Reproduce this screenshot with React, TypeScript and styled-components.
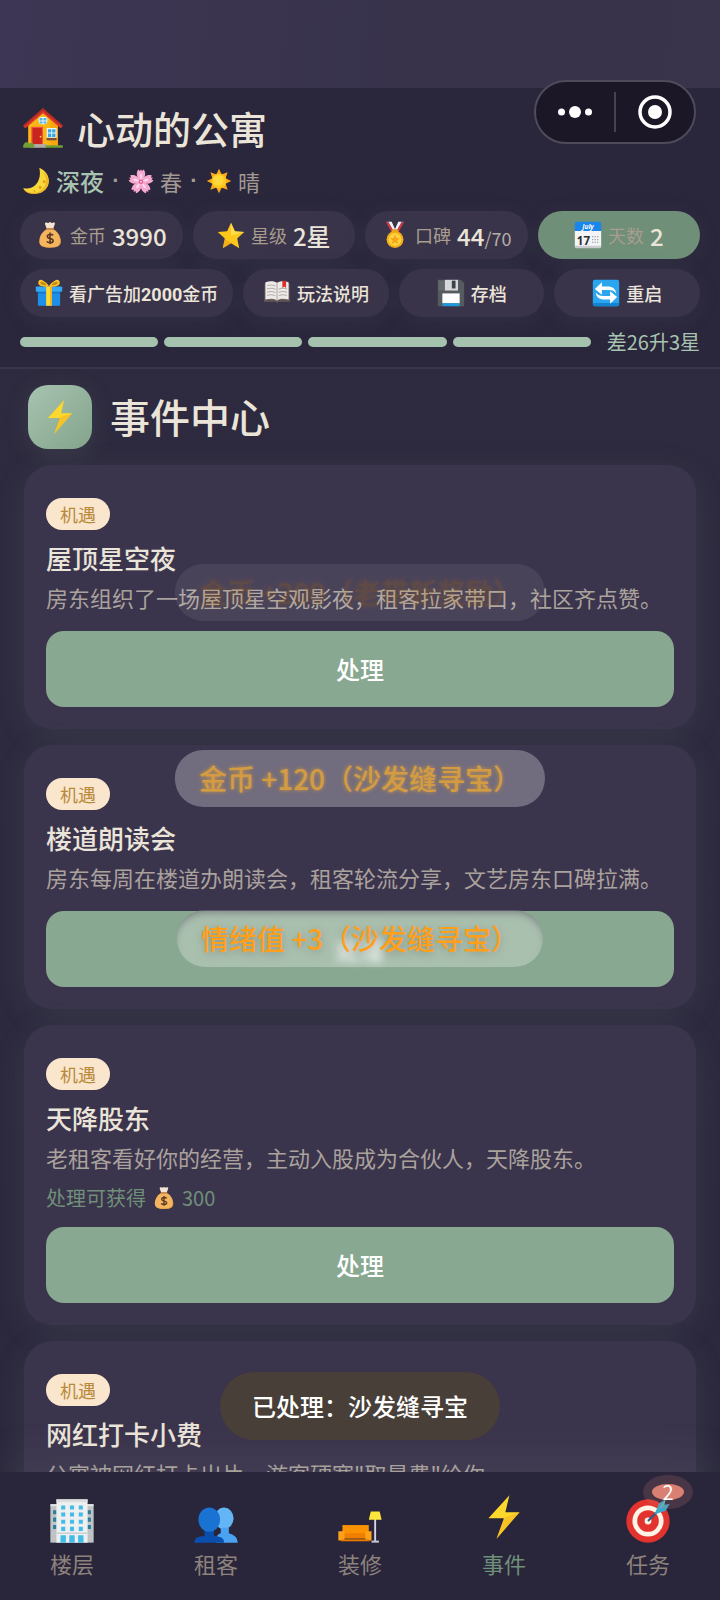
import React from "react";
import styled, { createGlobalStyle, css } from "styled-components";

const Global = createGlobalStyle`
  * { box-sizing: border-box; margin: 0; padding: 0; }
  body {
    font-family: "Noto Sans CJK SC", "Noto Sans", sans-serif;
    color: #ebe4d8;
    background: #2c283c;
  }
  button { font: inherit; color: inherit; border: 0; background: none; cursor: pointer; }
  svg { display: block; flex: none; }
`;

const Page = styled.div`
  position: relative;
  display: flex;
  flex-direction: column;
  height: 100vh;
  overflow: hidden;
  background: linear-gradient(180deg, #2e2a3e 0%, #2d293f 50%, #2b273d 100%);
`;

const StatusStrip = styled.div`
  flex: none;
  height: 88px;
  background: linear-gradient(100deg, #3d3654 0%, #38334b 60%, #39334b 100%);
`;

const Header = styled.header`
  flex: none;
  display: flex;
  flex-direction: column;
  padding: 12px 20px 10px;
  border-bottom: 2px solid #3a3647;
  background: #2a263c;
`;

const AppTitle = styled.h1`
  display: flex;
  align-items: center;
  gap: 13px;
  height: 56px;
  padding-left: 2px;
  font-size: 38px;
  line-height: 56px;
  font-weight: 500;
`;

const SeasonRow = styled.p`
  display: flex;
  align-items: center;
  height: 40px;
  margin: 5px 0 10px;
  padding-left: 2px;
  font-size: 22px;
  line-height: 40px;
  color: #a39b93;
  svg { margin-right: 6px; }
  strong { font-size: 24px; font-weight: 500; color: #a8c4b0; }
`;

const Dot = styled.span`
  width: 24px;
  text-align: center;
  font-weight: 700;
  font-family: "Liberation Sans", sans-serif;
`;

const PillRow = styled.div`
  display: flex;
  gap: 10px;
  margin-bottom: 10px;
`;

const pill = css`
  flex: 1 0 0;
  display: flex;
  align-items: center;
  justify-content: center;
  gap: 6px;
  height: 48px;
  border-radius: 24px;
  background: #3a344b;
  box-shadow: 0 4px 24px rgba(143, 176, 150, 0.08);
  white-space: nowrap;
`;

const Stat = styled.div<{ $active?: boolean }>`
  ${pill}
  ${(p) => p.$active && "background: #6f8f78;"}
`;

const StatLabel = styled.span`
  font-size: 18px;
  color: #a89d8e;
`;

const StatValue = styled.span`
  font-size: 24px;
  font-weight: 500;
  small { font-size: 18px; font-weight: 400; color: #b5aea6; }
`;

const ToolButton = styled.button`
  ${pill}
  && { padding: 0 15px; font-size: 18px; font-weight: 500; background: #3a344b; }
  b { font-family: Roboto, sans-serif; font-weight: 700; }
`;

const Progress = styled.div`
  display: flex;
  align-items: center;
  gap: 6px;
  height: 30px;
`;

const Segment = styled.span`
  flex: 1;
  height: 10px;
  border-radius: 5px;
  background: #a5c2ae;
`;

const ProgressText = styled.span`
  margin-left: 10px;
  font-size: 20px;
  line-height: 30px;
  color: #a8c4b0;
`;

const Main = styled.main`
  flex: 1;
  min-height: 0;
  overflow: hidden auto;
  scrollbar-width: none;
  padding: 16px 24px 0;
`;

const SectionHead = styled.div`
  display: flex;
  align-items: center;
  gap: 18px;
  padding: 0 4px;
  margin-bottom: 16px;
  h2 { padding-bottom: 2px; font-size: 40px; line-height: 60px; font-weight: 500; }
`;

const SectionIcon = styled.div`
  display: grid;
  place-items: center;
  width: 64px;
  height: 64px;
  border-radius: 20px;
  background: linear-gradient(135deg, #a6c3af, #84a48c);
  box-shadow: 0 4px 24px rgba(143, 176, 150, 0.15);
`;

const Cards = styled.div`
  display: flex;
  flex-direction: column;
  gap: 16px;
`;

const Card = styled.article`
  display: flex;
  flex-direction: column;
  align-items: flex-start;
  padding: 33px 22px 22px;
  border-radius: 28px;
  background: #3b344d;
  box-shadow: 0 6px 32px rgba(143, 176, 150, 0.12);
  h3 { margin: 9px 0 3px; font-size: 26px; line-height: 38px; font-weight: 500; }
  p { margin-bottom: 2px; font-size: 22px; line-height: 34px; color: #aaa29c; }
`;

const Tag = styled.span`
  padding: 0 14px;
  border-radius: 16px;
  font-size: 18px;
  line-height: 32px;
  color: #b8893a;
  background: #fae6cc;
`;

const Reward = styled.div`
  display: flex;
  align-items: center;
  gap: 6px;
  height: 28px;
  margin-top: 8px;
  font-size: 20px;
  line-height: 28px;
  color: #6f9079;
`;

const HandleButton = styled.button<{ $frosted?: boolean }>`
  width: 100%;
  height: 76px;
  margin-top: 15px;
  border-radius: 18px;
  && {
    padding-bottom: 2px;
    font-size: 24px;
    font-weight: 500;
    color: ${(p) => (p.$frosted ? "rgba(255, 255, 255, 0.05)" : "#fff")};
    text-shadow: ${(p) => (p.$frosted ? "0 0 9px #fff" : "none")};
    background: #89a891;
  }
`;

const Nav = styled.nav`
  flex: none;
  position: relative;
  display: flex;
  height: 128px;
  background: #29253b;
  box-shadow: 0 -8px 48px rgba(143, 160, 150, 0.12);
`;

const NavItem = styled.button<{ $active?: boolean }>`
  position: relative;
  flex: 1;
  display: flex;
  flex-direction: column;
  align-items: center;
  gap: 2px;
  && {
    padding-top: 26px;
    font-size: 22px;
    line-height: 34px;
    color: ${(p) => (p.$active ? "#6f9079" : "#8d837c")};
  }
  svg { transform: ${(p) => (p.$active ? "translateY(-4px)" : "none")}; }
`;

const Badge = styled.span`
  position: absolute;
  top: 12px;
  left: 50%;
  width: 32px;
  height: 16px;
  margin-left: 4px;
  border-radius: 50%;
  font-size: 20px;
  line-height: 16px;
  color: #fff;
  background: #d98072;
  box-shadow: 0 0 0 9px rgba(217, 128, 114, 0.18);
`;

const Capsule = styled.div`
  position: absolute;
  top: 80px;
  right: 24px;
  display: flex;
  align-items: center;
  width: 162px;
  height: 64px;
  border: 2px solid #4f4b5a;
  border-radius: 32px;
  background: #1b1726;
  button { flex: 1; display: grid; place-items: center; height: 40px; }
  button + button { border-left: 2px solid #46424f; }
`;

const Floater = styled.div<{ $top: number; $opacity: number; $color: string; $fill: string; $glow: string; $shade?: boolean }>`
  position: absolute;
  top: ${(p) => p.$top}px;
  left: 50%;
  transform: translateX(-50%);
  padding: 8px 24px;
  border-radius: 28px;
  font-size: 28px;
  line-height: 41px;
  font-weight: 500;
  white-space: nowrap;
  color: ${(p) => p.$color};
  background: ${(p) => p.$fill};
  box-shadow: ${(p) => (p.$shade ? "inset 0 6px 8px -4px rgba(59, 52, 77, 0.5)" : "none")};
  opacity: ${(p) => p.$opacity};
  text-shadow: ${(p) => p.$glow};
`;

const Toast = styled.div`
  position: absolute;
  bottom: 160px;
  left: 50%;
  transform: translateX(-50%);
  padding: 0 32px;
  border-radius: 34px;
  font-size: 24px;
  line-height: 68px;
  font-weight: 500;
  white-space: nowrap;
  color: #fff;
  background: #483f39;
`;

const art: Record<string, React.ReactNode> = {
  house: (
    <>
      <path d="M4 14 16 3l12 11v17H4z" fill="#fbb614" />
      <path d="M22 9l6 5v17h-6z" fill="#f9a70e" />
      <path d="M16 0 0 14l1.500 2.500L16 4l14.500 12.500L32 14z" fill="#d93a2b" />
      <path d="M16 0 0 14l.6 1L16 2l15.400 13 .6-1z" fill="#b52a20" />
      <rect x="12.500" y="7" width="7" height="6" rx="2" fill="#e9f7fc" />
      <path d="M13.300 8h2.300v2h-2.300zM16.400 8h2.300v2h-2.300zM13.300 10.700h2.300v1.600h-2.300zM16.400 10.700h2.300v1.600h-2.300z" fill="#4db6e6" />
      <rect x="6.500" y="15" width="9.500" height="15" fill="#f0523f" />
      <rect x="7.500" y="16" width="7.500" height="14" fill="#c9241d" />
      <circle cx="14" cy="23" r=".7" fill="#fdd75b" />
      <rect x="19" y="16" width="8" height="8" fill="#e9f7fc" />
      <path d="M20 17h2.700v2.700H20zM23.400 17h2.700v2.700h-2.700zM20 20.500h2.700v2.700H20zM23.400 20.500h2.700v2.700h-2.700z" fill="#38a8e0" />
      <rect x="19" y="24" width="8" height="2" fill="#7a5038" />
      <rect x="6" y="29" width="13" height="3" fill="#b6aaa5" />
      <path d="M0 32c-.5-4 3-5.500 5-3.500C7 27 9 29 9 30v2zM18 30h14v2H18z" fill="#6f9f35" />
    </>
  ),
  moon: (
    <>
      <path d="M20 0c18 8 14 30-4 31.500C8 32 2 29 .5 24.500 12 28 24 17 20 0z" fill="#fbd83a" />
      <path d="M24 5c9 10 3 23-8 25-6 1-12-1-15-4 2 4 8 6.500 15 5.500C34 29 35 10 24 5z" fill="#e9a91b" opacity=".7" />
      <circle cx="26" cy="17" r="1.800" fill="#dca01f" /><circle cx="21" cy="24" r="1.800" fill="#dca01f" />
      <circle cx="14" cy="28" r="1.200" fill="#dca01f" />
    </>
  ),
  blossom: (
    <>
      {[0, 72, 144, 216, 288].map((a) => (
        <path key={a} transform={`rotate(${a} 16 17)`} d="M16 17C10 12 9 5 12.500 1l2.200 2L16 .5 17.300 3l2.200-2C23 5 22 12 16 17z" fill="#f7a8d0" />
      ))}
      {[0, 72, 144, 216, 288].map((a) => (
        <path key={a} transform={`rotate(${a} 16 17)`} d="M16 17 14.500 9 16 6l1.500 3z" fill="#fde0ef" />
      ))}
      <circle cx="16" cy="17" r="3" fill="#e2559c" /><circle cx="16" cy="17" r="1.200" fill="#fff3b0" />
    </>
  ),
  sun: (
    <>
      {[0, 45, 90, 135, 180, 225, 270, 315].map((a) => (
        <path key={a} transform={`rotate(${a} 16 16)`} d="M12 8 16 0l4 8z" fill="#fba61c" />
      ))}
      <circle cx="16" cy="16" r="9.500" fill="#fdc81f" />
      <circle cx="15" cy="15" r="7" fill="#ffd93a" />
    </>
  ),
  bag: (
    <>
      <path d="M12 9C5 13 3 19 3 24c0 5 4 7.500 13 7.500S29 29 29 24c0-5-2-11-9-15z" fill="#f5b55f" />
      <path d="M26 16c2 4 3 7 1.500 10.500C26 30 22 31 16 31c-5 0-9-1-11-3 3 2.500 7 3.500 12 3.500C25 31.500 29 29 29 24c0-3-1-6-3-8z" fill="#d98e35" />
      <path d="M12 8C11 5 9.500 3.500 10 1.500c2-1.500 3 .5 4.500-.5 1-1 2-1 3 0s3-1 4.500.5C22 3.500 21 5 20 8z" fill="#f3e3d3" />
      <path d="M11.500 7.500h9v2.400h-9z" fill="#c98a4b" />
      <path d="M19.800 16.500c-1-1.500-7-2-7 1.200 0 3.500 7 1.800 7 5.200 0 3.400-6.500 2.800-7.600.8M16 13v14" fill="none" stroke="#5b3a26" strokeWidth="2" />
    </>
  ),
  star: (
    <>
      <path d="m16 1 4.700 10.500L32 12.500l-8.500 7.800L26 32l-10-6-10 6 2.500-11.700L0 12.500l11.300-1z" fill="#fcc81b" />
      <path d="m16 1 4.700 10.500L32 12.500 16 17z" fill="#ffe25a" opacity=".7" />
      <path d="M16 26 6 32l2.500-11.700z" fill="#ee9f17" opacity=".6" />
    </>
  ),
  medal: (
    <>
      <path d="M5 0h5l7 11-3 3zM27 0h-5l-7 11 3 3z" fill="#2f7fd6" />
      <path d="M8 0h4l5 11-2 2zM24 0h-4l-5 11 2 2z" fill="#f3f3f3" />
      <path d="M5 0h2.500l8 13H12zM27 0h-2.500l-8 13H20z" fill="#d7363a" />
      <rect x="12" y="9" width="8" height="4" rx="1.500" fill="#e0a11c" />
      <circle cx="16" cy="21.500" r="10.300" fill="#f2ac18" />
      <circle cx="16" cy="21.500" r="7.800" fill="#fdd23c" />
      <path d="m16 15.500 1.800 4 4.200.4-3.200 2.900.9 4.200-3.700-2.200-3.700 2.200.9-4.200-3.200-2.900 4.200-.4z" fill="#f6a51a" />
    </>
  ),
  calendar: (
    <>
      <rect x="0" y="9" width="32" height="22.500" rx="2" fill="#f4f4f4" />
      <path d="M2 0h28a2 2 0 0 1 2 2v9H0V2a2 2 0 0 1 2-2z" fill="#1b86ea" />
      <path d="M0 29h32v1a2 2 0 0 1-2 2H2a2 2 0 0 1-2-2z" fill="#c9ccd0" />
      <text x="16" y="8.500" textAnchor="middle" fontSize="8" fontStyle="italic" fontWeight="700" fontFamily="Open Sans, sans-serif" fill="#fff">July</text>
      <text x="2.500" y="28" fontSize="14" fontWeight="700" fontFamily="Open Sans, sans-serif" fill="#26303a">17</text>
      <path d="M21 18h8M21 21.500h8M21 25h8" stroke="#9ba3ab" strokeWidth="1.500" strokeDasharray="1.500 1.500" />
    </>
  ),
  gift: (
    <>
      <rect x="2.500" y="12" width="27" height="19.500" fill="#1e8fe8" />
      <rect x="0" y="8" width="32" height="6.500" rx="1" fill="#35a8f5" />
      <rect x="2.500" y="14.500" width="27" height="2" fill="#1268b5" opacity=".6" />
      <rect x="12.500" y="8" width="7" height="23.500" fill="#fdd835" />
      <rect x="17.500" y="8" width="2" height="23.500" fill="#f0ae1c" />
      <path d="M15 8C10 9 3 8 3 4S6-1 9 1s6 4 7 7c1-3 4-5 7-7s6-1 6 3-7 5-12 4z" fill="#fbc52a" />
      <path d="M13.500 6.500C9 7 5.500 6 5.500 4S8 2 9.500 3s3 2 4 3.500zM18.500 6.500C23 7 26.500 6 26.500 4S24 2 22.500 3s-3 2-4 3.500z" fill="#c98a12" />
    </>
  ),
  book: (
    <>
      <path d="M1 5 3 3h26l2 2v21H1z" fill="#7a6f6b" />
      <path d="M0 24h32v2.500H18l-2 1.500-2-1.500H0z" fill="#5f5552" />
      <path d="M2 3c5-2 11-2 14 1v21c-3-2.500-9-2.500-14-1zM30 3c-5-2-11-2-14 1v21c3-2.500 9-2.500 14-1z" fill="#eeeae8" />
      <path d="M16 4v21" stroke="#b9b2ae" strokeWidth="1.500" />
      <path d="M4 7c3-1 7-1 10 .5M4 11c3-1 7-1 10 .5M4 15c3-1 7-1 10 .5M4 19c3-1 7-1 10 .5M28 11c-3-1-7-1-10 .5M28 15c-3-1-7-1-10 .5M28 19c-3-1-7-1-10 .5" stroke="#b5b0ad" strokeWidth="1.300" fill="none" />
      <path d="M22.500 1h4.500v9l-2.200-2-2.300 2z" fill="#dd2c2c" />
    </>
  ),
  floppy: (
    <>
      <path d="M0 0h28l4 4v28H0z" fill="#565b5f" />
      <path d="M8.500 0h16v13h-16z" fill="#d6d8da" />
      <path d="M17 1h4.500v9.500H17z" fill="#3d4347" />
      <path d="M5.500 16.500h21v12h-21z" fill="#fff" />
      <path d="M5.500 28.500h21V32h-21z" fill="#1f97d8" />
      <path d="M1 1h6.500v12H1z" fill="#74797d" opacity=".5" />
    </>
  ),
  refresh: (
    <>
      <rect width="32" height="32" rx="2.500" fill="#2aa5f0" />
      <path d="M0 28h32v1.500a2.500 2.500 0 0 1-2.500 2.500h-27A2.500 2.500 0 0 1 0 29.500z" fill="#1383cf" />
      <path d="M2.500 11 11 3v5h7c6 0 10 3 10.500 9-2-3.500-5-4.500-9-4.500h-8.500V18z" fill="#fff" />
      <path d="M29.500 21 21 29v-5h-7C8 24 4 21 3.500 15.500c2 3 5 4 9 4H21V14z" fill="#fff" />
    </>
  ),
  bolt: (
    <>
      <path d="M20 0 4.500 17H16l-5.500 15L27.500 12.500H17z" fill="#fdd82c" />
      <path d="M27.500 12.500 10.500 32 16 17l1-1z" fill="#f5b51d" opacity=".55" />
    </>
  ),
  building: (
    <>
      <rect x="0" y="4.500" width="32" height="27.500" fill="#bfc3c6" />
      <rect x="0" y="3.500" width="5" height="1.500" fill="#e5e7e8" /><rect x="27" y="3.500" width="5" height="1.500" fill="#e5e7e8" />
      <path d="M2 8h2.500v3H2zM2 13.500h2.500v3H2zM2 19h2.500v3H2zM27.500 8H30v3h-2.500zM27.500 13.500H30v3h-2.500zM27.500 19H30v3h-2.500z" fill="#2c7f97" />
      <rect x="4.500" y="0" width="23" height="32" fill="#eeeff0" />
      <rect x="4.500" y="0" width="23" height="2" fill="#d9dbdd" />
      <path d="M8 4.500h3v3H8zM14.500 4.500h3v3h-3zM21 4.500h3v3h-3zM8 9.700h3v3H8zM14.500 9.700h3v3h-3zM21 9.700h3v3h-3zM8 15h3v3H8zM14.500 15h3v3h-3zM21 15h3v3h-3zM8 20.300h3v3H8zM14.500 20.300h3v3h-3zM21 20.300h3v3h-3zM7.500 26.500h4V32h-4zM14 26.500h4V32h-4zM20.500 26.500h4V32h-4z" fill="#45bce8" />
      <rect x="4.500" y="24.500" width="23" height="1" fill="#c9cccf" />
    </>
  ),
  people: (
    <>
      <ellipse cx="22" cy="14" rx="7" ry="8" fill="#64b5f6" />
      <path d="M16 32c0-5 1-6 3.500-7v-4h6v4c2.500 1 6.500 2 6.500 7z" fill="#4aa3f2" />
      <path d="M0 32c0-4 3-4.500 7.500-5v-5h7v5c4.500.5 7.500 1 7.500 5z" fill="#0b4fae" />
      <ellipse cx="11" cy="15" rx="8" ry="9" fill="#1a72d3" />
    </>
  ),
  sofa: (
    <>
      <path d="M26.500 14h1.400v17h-1.400z" fill="#d9d4e3" />
      <path d="M24.500 30.500h5.500V32h-5.500z" fill="#c7c2d1" />
      <path d="M24 9h6.500l1.500 6h-9.500z" fill="#fde63a" />
      <path d="M3 19h19.500v8H3z" fill="#fb9204" />
      <path d="M3 25h20v4H3z" fill="#f07f00" />
      <path d="M0 23.500h4.500v7H0zM20 23.500h4.500v7H20z" fill="#ffa21a" />
      <path d="M2 29.500h21V31H2z" fill="#e87a00" />
    </>
  ),
  target: (
    <>
      <circle cx="16" cy="16" r="16" fill="#e2332f" />
      <circle cx="16" cy="16" r="11.500" fill="#fff4e6" />
      <circle cx="16" cy="16" r="8" fill="#e2332f" />
      <circle cx="16" cy="16" r="2.500" fill="#fff4e6" />
      <path d="M16 16 25 7" stroke="#2b5a80" strokeWidth="1.500" />
      <path d="m21 11 3-8 5-3-1 4 4-.5-3 5z" fill="#38a5cf" />
      <path d="m21 11 8-11-1 4z" fill="#47c0b6" />
    </>
  ),
};

const Icon = ({ name, size }: { name: string; size: number }) => (
  <svg width={size} height={size} viewBox="-1 -1 34 34" aria-hidden="true">{art[name]}</svg>
);

const events = [
  { title: "屋顶星空夜", text: "房东组织了一场屋顶星空观影夜，租客拉家带口，社区齐点赞。" },
  { title: "楼道朗读会", text: "房东每周在楼道办朗读会，租客轮流分享，文艺房东口碑拉满。", frosted: true },
  { title: "天降股东", text: "老租客看好你的经营，主动入股成为合伙人，天降股东。", reward: 300 },
  { title: "网红打卡小费", text: "公寓被网红打卡出片，游客硬塞\"取景费\"给你" },
];

const tabs = [
  { icon: "building", label: "楼层" },
  { icon: "people", label: "租客" },
  { icon: "sofa", label: "装修" },
  { icon: "bolt", label: "事件", active: true },
  { icon: "target", label: "任务", badge: 2 },
];

export default function App() {
  return (
    <Page>
      <Global />
      <StatusStrip />
      <Header>
        <AppTitle><Icon name="house" size={42} />心动的公寓</AppTitle>
        <SeasonRow>
          <Icon name="moon" size={28} /><strong>深夜</strong><Dot>·</Dot>
          <Icon name="blossom" size={26} /><span>春</span><Dot>·</Dot>
          <Icon name="sun" size={26} /><span>晴</span>
        </SeasonRow>
        <PillRow>
          <Stat><Icon name="bag" size={28} /><StatLabel>金币</StatLabel><StatValue>3990</StatValue></Stat>
          <Stat><Icon name="star" size={28} /><StatLabel>星级</StatLabel><StatValue>2星</StatValue></Stat>
          <Stat><Icon name="medal" size={28} /><StatLabel>口碑</StatLabel><StatValue>44<small>/70</small></StatValue></Stat>
          <Stat $active><Icon name="calendar" size={28} /><StatLabel>天数</StatLabel><StatValue>2</StatValue></Stat>
        </PillRow>
        <PillRow>
          <ToolButton><Icon name="gift" size={28} /><span>看广告加<b>2000</b>金币</span></ToolButton>
          <ToolButton><Icon name="book" size={28} />玩法说明</ToolButton>
          <ToolButton><Icon name="floppy" size={28} />存档</ToolButton>
          <ToolButton><Icon name="refresh" size={28} />重启</ToolButton>
        </PillRow>
        <Progress>
          <Segment /><Segment /><Segment /><Segment />
          <ProgressText>差26升3星</ProgressText>
        </Progress>
      </Header>
      <Main>
        <SectionHead>
          <SectionIcon><Icon name="bolt" size={36} /></SectionIcon>
          <h2>事件中心</h2>
        </SectionHead>
        <Cards>
          {events.map((e) => (
            <Card key={e.title}>
              <Tag>机遇</Tag>
              <h3>{e.title}</h3>
              <p>{e.text}</p>
              {e.reward && <Reward>处理可获得<Icon name="bag" size={24} />{e.reward}</Reward>}
              <HandleButton $frosted={e.frosted}>处理</HandleButton>
            </Card>
          ))}
        </Cards>
      </Main>
      <Nav>
        {tabs.map((t) => (
          <NavItem key={t.label} $active={t.active}>
            <Icon name={t.icon} size={46} />
            {t.label}
            {t.badge && <Badge>{t.badge}</Badge>}
          </NavItem>
        ))}
      </Nav>
      <Floater $top={564} $opacity={0.25} $color="rgba(214,144,40,0.7)" $fill="rgba(255,255,255,0.3)" $glow="0 0 4px #d69028">金币 +200（老带新奖励）</Floater>
      <Floater $top={750} $opacity={0.8} $color="#f9b640" $fill="rgba(255,255,255,0.35)" $glow="0 0 4px rgba(249,182,64,0.9)">金币 +120（沙发缝寻宝）</Floater>
      <Floater $top={910} $opacity={1} $color="#ff9f1a" $fill="rgba(255,255,255,0.28)" $glow="0 2px 8px rgba(80,80,80,0.4)" $shade>情绪值 +3（沙发缝寻宝）</Floater>
      <Toast role="status">已处理：沙发缝寻宝</Toast>
      <Capsule>
        <button aria-label="更多">
          <svg width="34" height="14" viewBox="0 0 34 14" fill="#fff">
            <circle cx="3.500" cy="7" r="3.500" /><circle cx="17" cy="7" r="6" /><circle cx="30.500" cy="7" r="3.500" />
          </svg>
        </button>
        <button aria-label="关闭">
          <svg width="34" height="34" viewBox="0 0 34 34">
            <circle cx="17" cy="17" r="15" fill="none" stroke="#fff" strokeWidth="3.500" />
            <circle cx="17" cy="17" r="7" fill="#fff" />
          </svg>
        </button>
      </Capsule>
    </Page>
  );
}
